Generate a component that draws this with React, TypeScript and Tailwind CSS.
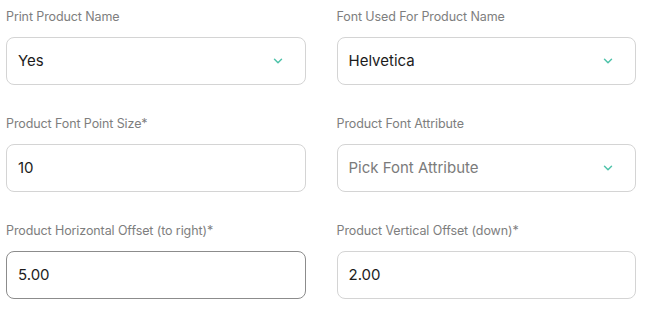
import { ChevronDown } from 'lucide-react'

type Field = {
  label: string
  value: string
  select?: boolean
  placeholder?: boolean
  focused?: boolean
}

const fields: Field[] = [
  { label: 'Print Product Name', value: 'Yes', select: true },
  { label: 'Font Used For Product Name', value: 'Helvetica', select: true },
  { label: 'Product Font Point Size*', value: '10' },
  { label: 'Product Font Attribute', value: 'Pick Font Attribute', select: true, placeholder: true },
  { label: 'Product Horizontal Offset (to right)*', value: '5.00', focused: true },
  { label: 'Product Vertical Offset (down)*', value: '2.00' },
]

export default function App() {
  return (
    <div className="min-h-screen bg-white px-[6px] pt-[7px] font-['Inter','Noto_Sans',sans-serif]">
      <div className="grid w-[630px] grid-cols-2 gap-x-[31px] gap-y-[29px]">
        {fields.map((f) => (
          <div key={f.label} className="flex flex-col">
            <label className="h-5 text-[12.5px] leading-5 tracking-[-0.1px] text-[#7e7e7e]">{f.label}</label>
            <div
              className={`mt-[10px] flex h-[48px] items-center justify-between rounded-lg border bg-white pl-[11px] pr-5 ${
                f.focused ? 'border-[#8c8c8c]' : 'border-[#d4d4d4]'
              }`}
            >
              <span
                className={`text-[15px] ${f.placeholder ? 'text-[#7b7b7b]' : 'text-[#1c1c1c]'}`}
              >
                {f.value}
              </span>
              {f.select && <ChevronDown size={14} strokeWidth={2.5} className="text-[#4fc3aa]" />}
            </div>
          </div>
        ))}
      </div>
    </div>
  )
}
